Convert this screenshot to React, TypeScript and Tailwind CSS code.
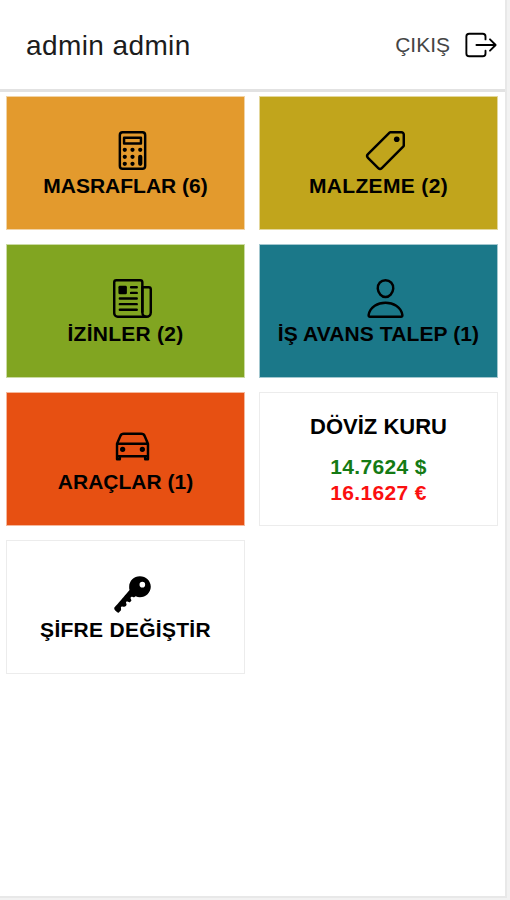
import type { ReactNode } from 'react';
import {
  IoCalculatorOutline,
  IoCarOutline,
  IoExitOutline,
  IoKey,
  IoNewspaperOutline,
  IoPersonOutline,
  IoPricetagOutline,
} from 'react-icons/io5';

type Tile = {
  label: string;
  color: string;
  tracking?: string;
  icon: ReactNode;
};

const tiles: Tile[] = [
  { label: 'MASRAFLAR (6)', color: 'bg-[#e39a2d] border-[#f1d3a5]', icon: <IoCalculatorOutline size={45} /> },
  { label: 'MALZEME (2)', color: 'bg-[#c1a51c] border-[#e3d79b]', tracking: 'tracking-[0.35px]', icon: <IoPricetagOutline size={45} /> },
  { label: 'İZİNLER (2)', color: 'bg-[#81a521] border-[#cbdba3]', tracking: 'tracking-[0.25px]', icon: <IoNewspaperOutline size={45} /> },
  { label: 'İŞ AVANS TALEP (1)', color: 'bg-[#1b7889] border-[#a3c7cf]', tracking: 'tracking-[0.1px]', icon: <IoPersonOutline size={45} /> },
  { label: 'ARAÇLAR (1)', color: 'bg-[#e75012] border-[#f5b89c]', icon: <IoCarOutline size={45} /> },
];

const cardClass = 'h-[134px] border flex flex-col items-center';

function MenuTile({ label, color, tracking, icon }: Tile) {
  return (
    <button className={`${cardClass} pt-[31px] ${color}`}>
      <span className="pl-[13px] [&_[fill=none]]:[stroke-width:28px]">{icon}</span>
      <span className={`text-[21px] leading-[26px] font-bold whitespace-nowrap ${tracking ?? ''}`}>{label}</span>
    </button>
  );
}

export default function App() {
  return (
    <div className="h-[900px] w-[510px] bg-[#f2f2f2] font-['Liberation_Sans',sans-serif] text-black">
      <div className="h-[898px] w-[507px] border-r-2 border-b-2 border-[#e8e8e8] bg-white">
        <header className="flex h-[92px] items-center justify-between border-b-3 border-[#e2e2e2] pr-[6px] pl-[26px]">
          <h1 className="pt-[2px] text-[28px] leading-8 tracking-[0.4px] text-[#1c1c1c]">admin admin</h1>
          <button className="flex items-center gap-[13px] text-[21px] text-[#444]">
            <span className="pt-px">ÇIKIŞ</span>
            <IoExitOutline size={36} className="text-black [&_[fill=none]]:[stroke-width:27px]" />
          </button>
        </header>

        <main className="grid grid-cols-[239px_239px] gap-[14px] pt-1 pl-[6px]">
          {tiles.map((tile) => (
            <MenuTile key={tile.label} {...tile} />
          ))}

          {/* Exchange rates */}
          <div className={`${cardClass} border-[#ececec] bg-white pt-[21px] font-bold`}>
            <h2 className="text-[22px] leading-[26px]">DÖVİZ KURU</h2>
            <p className="mt-[14px] text-[21px] leading-[26px] tracking-[0.35px] text-[#147a14]">14.7624 $</p>
            <p className="text-[21px] leading-[26px] tracking-[0.35px] text-[#fb1010]">16.1627 €</p>
          </div>

          <MenuTile
            label="ŞİFRE DEĞİŞTİR"
            color="bg-white border-[#ececec]"
            tracking="tracking-[0.28px]"
            icon={<IoKey size={45} />}
          />
        </main>
      </div>
    </div>
  );
}
